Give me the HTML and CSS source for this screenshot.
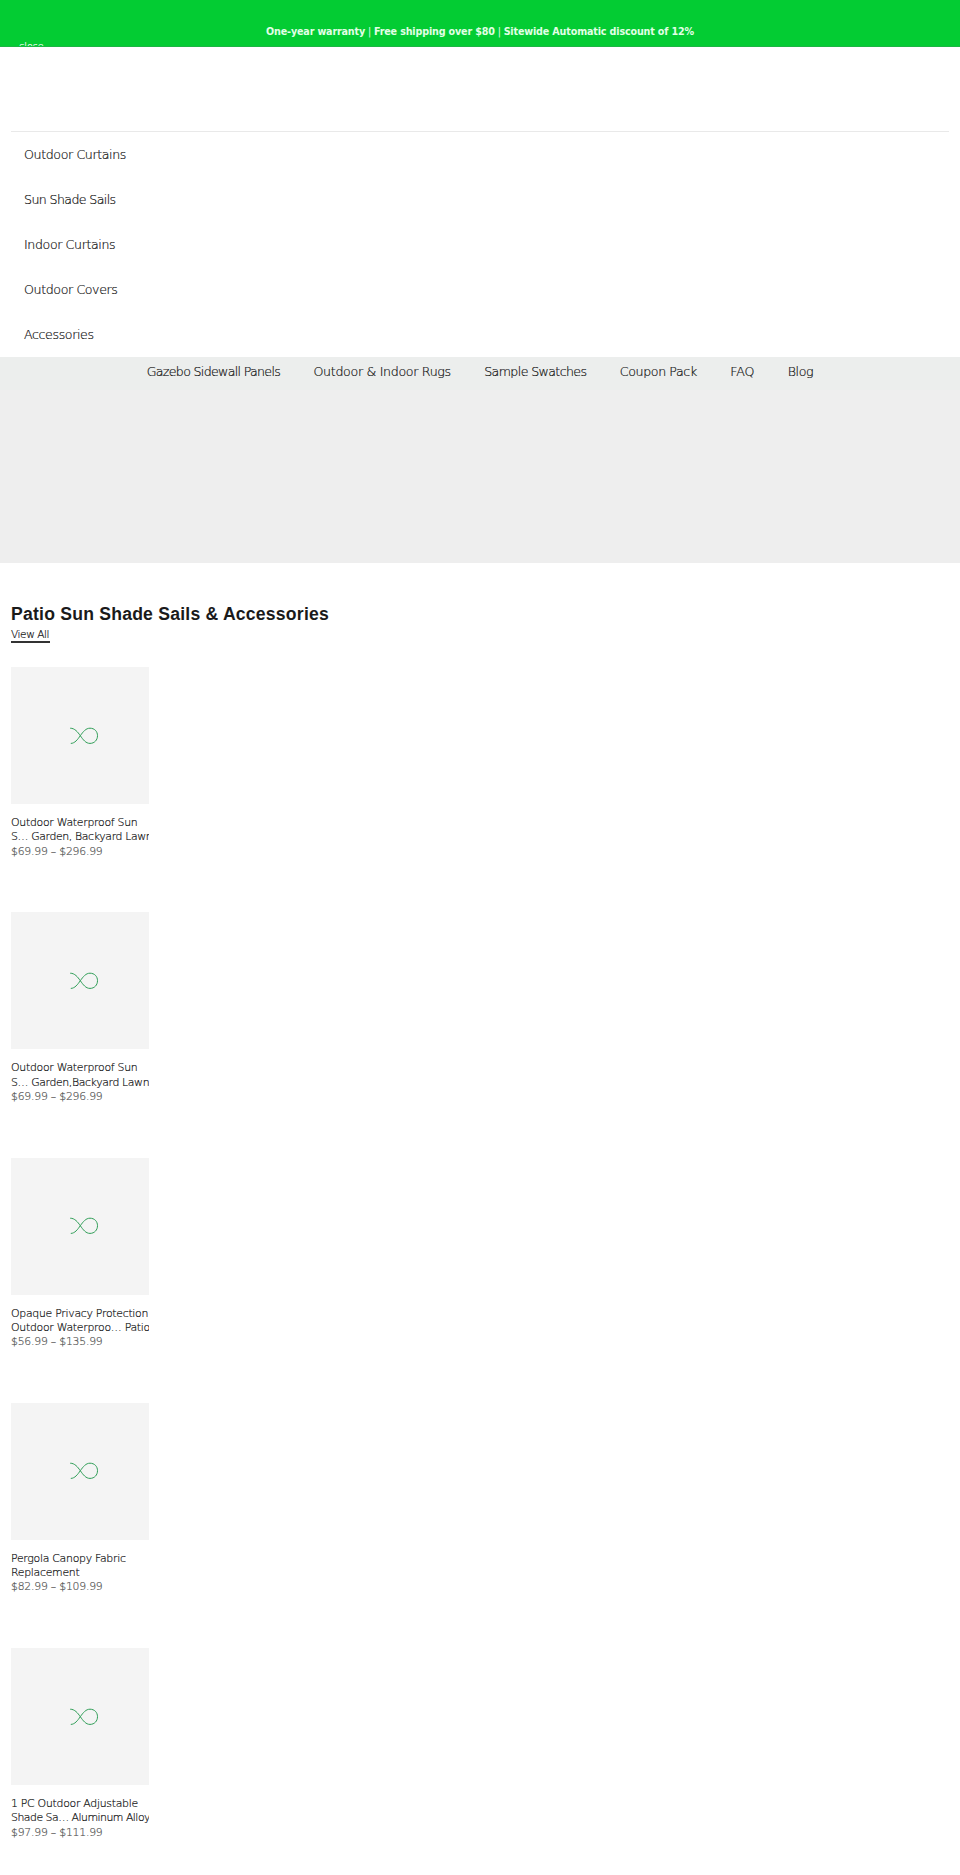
FILE: index.html
```html
<!DOCTYPE html>
<html lang="en">
<head>
<meta charset="utf-8">
<title>Patio Sun Shade Sails &amp; Accessories</title>
<link rel="stylesheet" href="styles.css">
</head>
<body>
<svg class="defs" width="0" height="0" aria-hidden="true">
  <symbol id="loop" viewBox="0 0 30 18"><path d="M1.2 1.2C5.8 1.2 8.7 5 11.3 8.7C14.2 12.8 16.8 16.4 21 16.4C25.5 16.4 28.5 13 28.5 8.7C28.5 4.4 25.5 1.2 21 1.2C16.8 1.2 14.2 4.7 11.3 8.7C8.7 12.4 5.8 16.4 1.8 16.4" fill="none" stroke="#2f9e57" stroke-width="1"/></symbol>
</svg>
<div class="banner">
  <p class="banner-text"><b>One-year warranty</b> | <b>Free shipping over $80</b> | <b>Sitewide Automatic discount of 12%</b></p>
  <span class="close">close</span>
</div>
<header class="header"></header>
<nav class="menu">
  <a>Outdoor Curtains</a>
  <a class="tight">Sun Shade Sails</a>
  <a>Indoor Curtains</a>
  <a>Outdoor Covers</a>
  <a>Accessories</a>
</nav>
<nav class="links">
  <a class="tighter">Gazebo Sidewall Panels</a>
  <a class="loose">Outdoor &amp; Indoor Rugs</a>
  <a class="tight">Sample Swatches</a>
  <a>Coupon Pack</a>
  <a class="looser">FAQ</a>
  <a>Blog</a>
</nav>
<div class="hero"></div>
<main class="collection">
  <h2>Patio Sun Shade Sails &amp; Accessories</h2>
  <a class="view-all">View All</a>
  <div class="products">
    <article class="product">
      <div class="thumb"><svg><use href="#loop"/></svg></div>
      <h3>Outdoor Waterproof Sun<br><span class="snug">S… Garden, Backyard Lawn</span></h3>
      <p>$69.99 – $296.99</p>
    </article>
    <article class="product">
      <div class="thumb"><svg><use href="#loop"/></svg></div>
      <h3>Outdoor Waterproof Sun<br><span class="snug">S… Garden,Backyard Lawn</span></h3>
      <p>$69.99 – $296.99</p>
    </article>
    <article class="product">
      <div class="thumb"><svg><use href="#loop"/></svg></div>
      <h3>Opaque Privacy Protection<br>Outdoor Waterproo… Patio</h3>
      <p>$56.99 – $135.99</p>
    </article>
    <article class="product">
      <div class="thumb"><svg><use href="#loop"/></svg></div>
      <h3>Pergola Canopy Fabric<br>Replacement</h3>
      <p>$82.99 – $109.99</p>
    </article>
    <article class="product">
      <div class="thumb"><svg><use href="#loop"/></svg></div>
      <h3>1 PC Outdoor Adjustable<br><span class="snugger">Shade Sa… Aluminum Alloy</span></h3>
      <p>$97.99 – $111.99</p>
    </article>
  </div>
</main>
</body>
</html>
```
FILE: styles.css
```css
* { box-sizing: border-box; }
body {
  margin: 0;
  background: #fff;
  color: #111;
  font-family: "DejaVu Sans Light", "DejaVu Sans", sans-serif;
}
h2, h3, p { margin: 0; font-weight: 400; }
.defs { position: absolute; }

.banner {
  height: 47px;
  overflow: hidden;
  background: #03cc33;
  color: #fff;
  font-size: 9.6px;
  line-height: 16px;
  border-bottom: 1px solid #1cb544;
}
.banner-text {
  padding-top: 24px;
  text-align: center;
  font-family: "DejaVu Sans", sans-serif;
  letter-spacing: -0.16px;
  color: #e2ffe6;
}
.close {
  display: block;
  padding-left: 19px;
  line-height: 13px;
  -webkit-text-stroke: 0.2px #fff;
}

.header { height: 85px; margin: 0 11px; border-bottom: 1px solid #e9e9e9; }

.menu, .links {
  font-size: 12.6px;
  letter-spacing: -0.38px;
  -webkit-text-stroke: 0.2px #111;
}
.menu { display: flex; flex-direction: column; height: 225px; padding-left: 24px; line-height: 45px; }
.links {
  display: flex;
  justify-content: center;
  gap: 33.4px;
  height: 33px;
  background: #eceeed;
  line-height: 30px;
  white-space: nowrap;
}
.tight { letter-spacing: -0.61px; }
.tighter { letter-spacing: -0.68px; }
.loose { letter-spacing: -0.31px; }
.looser { letter-spacing: -0.08px; }

.hero { height: 173px; background: #eee; }

.collection { padding: 38px 11px 0; }
.collection h2 {
  font: 700 17.6px/26px "Liberation Sans", Arial, sans-serif;
  letter-spacing: 0.22px;
  color: #1a1a1a;
}
.view-all {
  display: block;
  width: 38.5px;
  height: 16px;
  border-bottom: 2px solid #333;
  font-size: 10.6px;
  line-height: 15px;
  letter-spacing: -0.45px;
  -webkit-text-stroke: 0.2px #111;
  white-space: nowrap;
}
.products { display: grid; grid-auto-rows: 245.3px; padding-top: 24px; }
.product { width: 137.5px; overflow: hidden; white-space: nowrap; }
.thumb {
  display: flex;
  align-items: center;
  justify-content: center;
  height: 137px;
  margin-bottom: 12px;
  background: #f4f4f4;
}
.thumb svg { width: 30px; height: 18px; margin-left: 8px; }
.product h3 {
  font-size: 10.9px;
  line-height: 14.3px;
  letter-spacing: -0.28px;
  -webkit-text-stroke: 0.2px #111;
}
.snug { letter-spacing: -0.37px; }
.snugger { letter-spacing: -0.5px; }
.product p {
  font-size: 10.8px;
  line-height: 14.4px;
  letter-spacing: -0.2px;
  color: #555;
  -webkit-text-stroke: 0.2px #555;
}
```
